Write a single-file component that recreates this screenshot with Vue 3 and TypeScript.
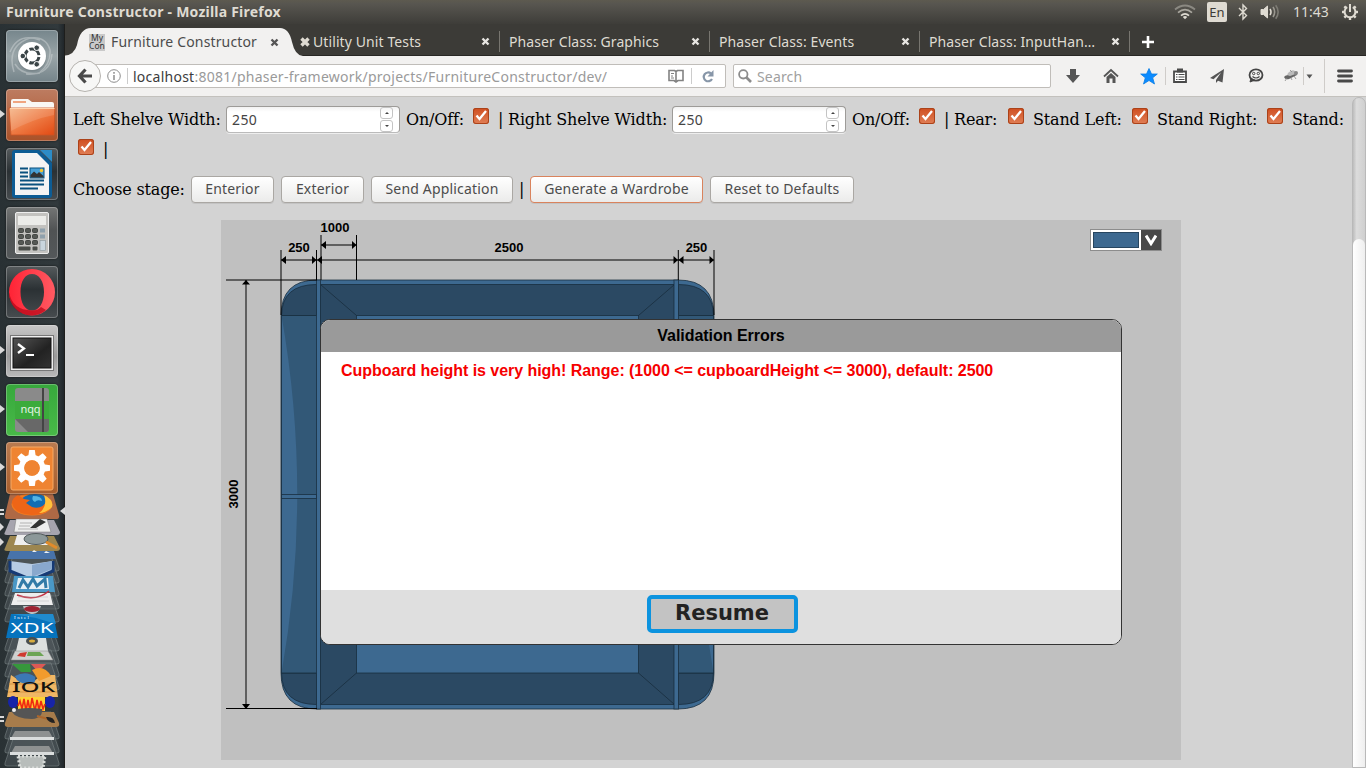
<script setup lang="ts">
interface Tab { title: string; mark?: boolean }
interface Field { label: string; width: number }
interface StageButton { label: string; width: number; active?: boolean; bar?: boolean }

const tabs: Tab[] = [
  { title: 'Utility Unit Tests', mark: true },
  { title: 'Phaser Class: Graphics' },
  { title: 'Phaser Class: Events' },
  { title: 'Phaser Class: InputHan…' },
]

const shelves: Field[] = [
  { label: 'Left Shelve Width:', width: 147 },
  { label: 'Right Shelve Width:', width: 158 },
]
const toggles: Field[] = [
  { label: 'Rear:', width: 44 },
  { label: 'Stand Left:', width: 89 },
  { label: 'Stand Right:', width: 100 },
]

const buttons: StageButton[] = [
  { label: 'Enterior', width: 83 },
  { label: 'Exterior', width: 83 },
  { label: 'Send Application', width: 142, bar: true },
  { label: 'Generate a Wardrobe', width: 173, active: true },
  { label: 'Reset to Defaults', width: 144 },
]

const plates: number[] = [562, 574, 587, 600, 613, 642, 655, 668, 681, 730, 744, 757]
const keys: number[] = [0, 1, 2, 3, 4, 5, 6, 7, 8]
const teeth: number[] = [0, 45, 90, 135, 180, 225, 270, 315]
</script>

<template>
  <div class="desktop">
    <header class="panel">
      <span class="panel-title">Furniture Constructor - Mozilla Firefox</span>
      <div class="indicators">
        <svg width="22" height="16" viewBox="0 0 22 16" fill="none" stroke-width="1.7">
          <path d="M1 5.5Q11 -2.5 21 5.5" stroke="#8b8982" />
          <path d="M4 8.7Q11 2.7 18 8.7" stroke="#aaa79f" />
          <path d="M7 11.6Q11 8 15 11.6" stroke="#dfdbd2" />
          <path d="M8.8 13L11 15.2 13.2 13Q11 11.2 8.8 13Z" fill="#dfdbd2" />
        </svg>
        <span class="lang">En</span>
        <svg class="bt" width="10" height="18" viewBox="0 0 10 18" fill="none" stroke="#dfdbd2" stroke-width="1.4"><path d="M1 5L8.5 12.5 5 16V2L8.5 5.5 1 13" /></svg>
        <svg class="vol" width="20" height="16" viewBox="0 0 20 16" fill="none" stroke-width="1.6">
          <path d="M1 5.5H3.5L7.5 2V14L3.5 10.5H1Z" fill="#dfdbd2" stroke="#dfdbd2" stroke-width="1" />
          <path d="M10 5Q12 8 10 11" stroke="#dfdbd2" /><path d="M13 3Q16.3 8 13 13" stroke="#9a978f" /><path d="M15.7 1.3Q20.6 8 15.7 14.7" stroke="#7d7b74" />
        </svg>
        <span class="clock">11:43</span>
        <svg width="18" height="18" viewBox="-9 -9 18 18" fill="none" stroke="#dfdbd2">
          <path d="M-2.8-4.8A5.4 5.4 0 1 0 2.8-4.8" stroke-width="2" />
          <path d="M0-8V0" stroke-width="2" />
          <path v-for="a in [45, 90, 135, 180, 225, 270, 315]" :key="a" d="M0-5.5V-8" stroke-width="2.4" :transform="`rotate(${a})`" />
        </svg>
      </div>
    </header>

    <div class="below">
      <aside class="launcher">
        <div class="tile dash">
          <svg width="52" height="52" viewBox="0 0 52 52">
            <g fill="none" stroke="#d5dadb" opacity=".45" stroke-width="1.5"><path d="M8 42Q0 16 24 8Q40 6 44 20Q45 34 34 42" /><path d="M4 22Q12 2 34 10M20 44Q44 46 46 24M9 34Q16 46 34 43" /></g>
            <circle cx="26" cy="27" r="14.5" fill="#6f7b80" opacity=".5" /><circle cx="26" cy="26" r="14" fill="#fff" />
            <circle cx="26" cy="26" r="7" fill="none" stroke="#3a4447" stroke-width="3" stroke-dasharray="12.6 2" stroke-dashoffset="-1" />
            <g fill="#3a4447" stroke="#fff" stroke-width="1"><circle cx="16.8" cy="26" r="2.8" /><circle cx="30.7" cy="17.7" r="2.8" /><circle cx="30.7" cy="34.3" r="2.8" /></g>
          </svg>
        </div>
        <div class="tile files">
          <svg width="52" height="52" viewBox="0 0 52 52">
            <defs><linearGradient id="fold" x1="0" y1="0" x2="1" y2="1"><stop offset="0" stop-color="#f5b485" /><stop offset=".5" stop-color="#ee7a43" /><stop offset="1" stop-color="#e24912" /></linearGradient></defs>
            <path d="M5 19V12Q5 10 7 10H22L26 13H46Q48 13 48 15V20H5Z" fill="#f9f7f4" /><rect x="7" y="12" width="13" height="2" fill="#f0a580" />
            <path d="M3 19H49L48 46H5Z" fill="url(#fold)" stroke="#cd5424" stroke-width=".8" /><path d="M4 19.5H48.5" stroke="#ffd2ac" />
            <path d="M4 20H48V26Q27 30 5 42Z" fill="#fff" opacity=".13" />
          </svg><i class="pip"></i>
        </div>
        <div class="tile dark">
          <svg width="52" height="52" viewBox="0 0 52 52">
            <path d="M6 5Q6 2 9 2H33L46 15V47Q46 50 43 50H9Q6 50 6 47Z" fill="#0d5c94" /><path d="M34 2H46V14Z" fill="#2c8cc7" />
            <path d="M9 5H31L43 17V47H9Z" fill="#f4f4f4" />
            <path d="M14 20.5H22M14 24.5H22M14 28.5H22M14 32.5H38M14 36.5H38M14 40.5H32" stroke="#09517f" stroke-width="2" />
            <rect x="24" y="20" width="14" height="10" fill="#49a0d6" stroke="#09517f" /><path d="M24.5 29.5V27L28 23.5 31 26 33 24 37.5 28V29.5Z" fill="#333" /><circle cx="35.5" cy="22.5" r="1.7" fill="#f5c62c" />
          </svg>
        </div>
        <div class="tile calc">
          <svg width="52" height="52" viewBox="0 0 52 52">
            <rect x="9.5" y="5.5" width="33" height="41" rx="1.5" fill="#c3c2bf" stroke="#eee" /><rect x="12" y="9" width="28" height="9" fill="#ecece9" />
            <rect v-for="k in keys" :key="k" :x="12.5 + (k % 3) * 7" :y="21.5 + Math.floor(k / 3) * 6" width="5" height="4" rx="1" fill="#555854" stroke="#343634" stroke-width=".8" />
            <rect x="12.5" y="39.5" width="12" height="4" rx="1" fill="#4a4d49" /><rect x="26.5" y="39.5" width="5" height="4" rx="1" fill="#4a4d49" />
            <rect x="34" y="21.5" width="5" height="4" fill="#8fa0ac" /><rect x="34" y="27.5" width="5" height="4" fill="#8fa0ac" /><rect x="34" y="33.5" width="5.5" height="10" fill="#c9d5dd" stroke="#8a959c" stroke-width=".6" />
          </svg>
        </div>
        <div class="tile dark">
          <svg width="52" height="52" viewBox="0 0 52 52">
            <defs><linearGradient id="op" x1="0" y1="0" x2="1" y2="0"><stop offset="0" stop-color="#ff2335" /><stop offset="1" stop-color="#ff5a62" /></linearGradient></defs>
            <path fill-rule="evenodd" d="M26 3A23 23.2 0 1 0 26 49.4A23 23.2 0 1 0 26 3ZM26 8C33 8 38 15 38 26S33 44.5 26 44.5S14.5 37 14.5 26S19 8 26 8Z" fill="url(#op)" />
            <path d="M26 49.4C12 49.4 3 39 3 26Q6 44 26 44.5Q32 44.5 35 41L40 44Q34 49.4 26 49.4Z" fill="#b30416" opacity=".7" />
          </svg>
        </div>
        <div class="tile term">
          <svg width="52" height="52" viewBox="0 0 52 52">
            <defs><linearGradient id="tm" x1="0" y1="0" x2="1" y2="1"><stop offset="0" stop-color="#555" /><stop offset=".6" stop-color="#222" /><stop offset="1" stop-color="#333" /></linearGradient></defs>
            <rect x="4.5" y="10.5" width="43" height="35" fill="#eee" stroke="#777" /><rect x="7" y="13" width="38" height="30" fill="url(#tm)" stroke="#111" />
            <path d="M12 19L18 23.5 12 28" fill="none" stroke="#fff" stroke-width="2.3" /><path d="M20 30H28" stroke="#fff" stroke-width="2" />
          </svg><i class="pip"></i>
        </div>
        <div class="tile nqq">
          <svg width="52" height="52" viewBox="0 0 52 52">
            <rect x="9" y="4" width="34" height="44" rx="3" fill="#8a8a8a" /><rect x="9" y="17" width="34" height="18" fill="#3cab3c" /><path d="M9 35H43V45Q43 48 40 48H22Z" fill="#686868" /><rect x="36" y="4" width="2" height="44" fill="#444" />
            <text x="14.5" y="29" font-family="Noto Sans, sans-serif" font-size="11" fill="#e8f5e8" textLength="20">nqq</text>
          </svg><i class="pip"></i>
        </div>
        <div class="tile gear">
          <svg width="52" height="52" viewBox="-26 -26 52 52">
            <rect x="-21" y="-21" width="42" height="43" rx="2" fill="#ef8432" stroke="#f6aa65" />
            <g fill="#fff"><path v-for="a in teeth" :key="a" d="M-4-10L-2.8-18H2.8L4-10Z" :transform="`rotate(${a})`" /></g><circle r="10.5" fill="none" stroke="#fff" stroke-width="5.5" /><circle r="7.7" fill="#ef8432" />
          </svg><i class="pip"></i>
        </div>
        <svg class="pile" width="65" height="274" viewBox="0 494 65 274">
          <g fill="#596165" fill-opacity=".45" stroke="#7e8688" stroke-opacity=".55"><path v-for="y in plates" :key="y" :d="`M13 ${y - 18}H51L59 ${y + 6}Q60 ${y + 9} 57 ${y + 9}H7Q4 ${y + 9} 5 ${y + 6}Z`" /></g>
          <path d="M10 494H53L59 515Q60 519 56 519H8Q4 519 5 515Z" fill="#ae6945" />
          <ellipse cx="32" cy="504.500" rx="20.500" ry="11" fill="#f27b20" /><ellipse cx="35" cy="502" rx="14" ry="8" fill="#126db4" /><path d="M33 496Q42 496 42 501Q37 499 35 502Q31 500 33 496Z" fill="#55b5e4" />
          <path d="M12 503Q12 498 18 495L24 499 30 500 26 503 32 507Q42 510 48 500L52 502Q50 515 32 515Q14 514 12 503Z" fill="#ee6517" /><path d="M44 495Q54 500 52 507Q46 513 39 513Q48 507 44 495Z" fill="#ffc23b" />
          <path d="M10 520H54L60 532Q60 535 57 535H7Q3 535 5 532Z" fill="#a6a4ae" /><path d="M16 519H47L51 532H14Z" fill="#eee" stroke="#777" stroke-width=".5" /><path d="M20 523H32M19 526H30M18 529H38" stroke="#999" stroke-width=".7" /><path d="M30 528L40 519 46 522 36 528Z" fill="#333" />
          <path d="M10 536H54L60 548Q60 551 57 551H7Q3 551 5 548Z" fill="#9c8650" /><path d="M17 535H44L48 545H14Z" fill="#eee" /><ellipse cx="36" cy="539" rx="12" ry="5.5" fill="#8c9899" stroke="#555d5e" /><path d="M46 542L57 548" stroke="#e08b2a" stroke-width="3" />
          <path d="M10 551H54L56 559H7Z" fill="#4873aa" /><path d="M32 552L34 550 37 552ZM44 553L46 551 50 553Z" fill="#edf2f7" />
          <path d="M10 561L32 564 53 561V571L32 580 10 571Z" fill="#b7cce4" /><path d="M10 561V571L32 580 53 571V561" fill="none" stroke="#163a75" stroke-width="3" /><path d="M32 565V577L52 569V561Z" fill="#89a8cd" />
          <path d="M14 576H53L55 592H12Z" fill="#4a98c6" /><path d="M18 578H48L49 589H16Z" fill="#e5f0f5" /><path d="M19 588L23 580 28 587 33 579 37 586 45 579 46 588" fill="none" stroke="#317ba7" stroke-width="3" />
          <path d="M15 593H50L53 605H11Z" fill="#eee" /><path d="M17 595Q36 602 49 591" fill="none" stroke="#c23244" stroke-width="1.5" /><path d="M18 597H48M17 601H49" stroke="#bbb" stroke-width=".5" />
          <path d="M23 606H41Q39 613 33 614V619H39V621H26V619H31V614Q24 612 23 606Z" fill="#b9c0c2" /><ellipse cx="32" cy="609" rx="8" ry="3" fill="#9d2332" />
          <path d="M11 614H53L58 638H6Z" fill="#0673bd" /><path d="M12 614H53L56 624 36 618Z" fill="#208bcd" /><text x="10.5" y="633" textLength="43" lengthAdjust="spacingAndGlyphs" font-family="Noto Sans, sans-serif" font-size="14" fill="#fff">XDK</text><text x="14" y="618.5" textLength="15" font-family="Liberation Serif, serif" font-size="5" fill="#fff">Intel</text>
          <path d="M19 638H46L48 651H16Z" fill="#dce0df" /><ellipse cx="32" cy="641" rx="6" ry="4" fill="#494f50" /><ellipse cx="32" cy="641" rx="3" ry="1.5" fill="#d8ad3f" />
          <path d="M15 651H48L53 660H11Z" fill="#cfd1d0" stroke="#888" stroke-width=".5" /><path d="M20 653L27 652 25 657 17 656Z" fill="#cf392f" /><path d="M28 652H40L44 656H27Z" fill="#6ca454" />
          <path d="M11 675L20 681H34L42 675H55L58 697H7Z" fill="#f0b765" /><path d="M8 692H57M9 684H56" stroke="#d79443" stroke-width="1" />
          <path d="M12 664H30L31 672H21Z" fill="#36973c" /><path d="M31 664H46L38 672Z" fill="#dd5955" /><path d="M15 676Q26 670 35 677Q37 684 29 684Q17 684 15 676Z" fill="#3c78b5" /><path d="M32 670Q44 664 51 676L39 681Z" fill="#f29b2d" />
          <text x="12" y="692" textLength="43" lengthAdjust="spacingAndGlyphs" font-family="Noto Sans, sans-serif" font-weight="500" font-size="15" fill="#15120d">IOK</text>
          <ellipse cx="13" cy="702" rx="5" ry="6" fill="#1724a8" /><ellipse cx="50" cy="702" rx="5" ry="6" fill="#1724a8" /><rect x="18" y="697" width="27" height="14" fill="#ffd234" /><path d="M18 706L20 701 22 709 24 699 26 711 28 700 30 711 32 698 35 711 37 700 39 710 41 701 43 709 45 704" fill="none" stroke="#f02912" stroke-width="1.6" />
          <path d="M9 712H54L59 723Q60 727 56 727H8Q4 727 5 723Z" fill="#a77c4b" /><path d="M11 711Q23 706 42 709Q43 718 32 719Q16 719 11 711Z" fill="#555" /><circle cx="14" cy="710" r="2" fill="#eee" /><path d="M37 716L48 719" stroke="#ad662b" stroke-width="2" /><path d="M46 717Q54 716 55 723Q48 723 46 717Z" fill="#222" />
          <path d="M15 731H49L54 740H10Z" fill="#8e9191" /><path d="M10 737H54V740H10Z" fill="#dadddd" /><path d="M15 746H49L54 755H10Z" fill="#8e9191" /><path d="M10 752H54V755H10Z" fill="#dadddd" /><path d="M18 756L45 756 43 768H20Z" fill="#b8bdbb" stroke="#d9dcda" stroke-dasharray="2 2" stroke-width="3" />
          <g fill="#d9d9d9"><path d="M0 509H4V511H0ZM0 513H4V515H0ZM65 507V515L60 511Z" /><path d="M0 523L4 527 0 531ZM0 538L4 542 0 546Z" /><path d="M0 716H4V718H0ZM0 720H4V722H0Z" /></g>
        </svg>
      </aside>

      <main class="browser">
        <div class="tabbar">
          <div class="tab-active">
            <svg class="tab-shape" width="240" height="33" viewBox="65 24 240 33"><path d="M65 57V55.5Q74 55 77 45Q80 28 91 28H280Q289 28 292 42Q295 55.5 303 56H305V57Z" fill="#f2f1f0" /></svg>
            <span class="favicon">My<br>Con</span>
            <span class="tab-title">Furniture Constructor</span>
            <svg class="x" width="9" height="9" viewBox="0 0 9 9"><path d="M1.5 1.5L7.5 7.5M7.5 1.5L1.5 7.5" stroke="#555" stroke-width="2.4" /></svg>
          </div>
          <div v-for="t in tabs" :key="t.title" class="tab" :class="{ marked: t.mark }">
            <svg v-if="t.mark" class="heavy" width="10" height="10" viewBox="0 0 10 10"><path d="M1.5 1.5L8.5 8.5M8.5 1.5L1.5 8.5" stroke="#dfdbd2" stroke-width="3.4" /></svg>
            <span class="tab-title">{{ t.title }}</span>
            <svg class="x" width="9" height="9" viewBox="0 0 9 9"><path d="M1.5 1.5L7.5 7.5M7.5 1.5L1.5 7.5" stroke="#e8e6e2" stroke-width="2.4" /></svg>
          </div>
          <svg class="plus" width="14" height="14" viewBox="0 0 14 14"><path d="M7 1V13M1 7H13" stroke="#fff" stroke-width="2.6" /></svg>
        </div>

        <nav class="nav">
          <span class="back"><svg width="16" height="16" viewBox="0 0 16 16" fill="none" stroke="#4a4a4a" stroke-width="3.2"><path d="M8.5 1.5L2.5 8 8.5 14.5M3 8H15" /></svg></span>
          <div class="url">
            <svg width="14" height="14" viewBox="0 0 14 14"><circle cx="7" cy="7" r="6.3" fill="none" stroke="#8d8d8d" /><path d="M7 6V11M7 3V4.7" stroke="#8d8d8d" stroke-width="1.5" /></svg>
            <i class="bar"></i>
            <span class="address">localhost<em>:8081/phaser-framework/projects/FurnitureConstructor/dev/</em></span>
            <svg class="reader" width="16" height="14" viewBox="0 0 16 14" fill="none" stroke="#828282" stroke-width="1.6"><path d="M8 2.5L6.5 1.5H1V11.5H6L8 13 10 11.5H15V1.5H9.5L8 2.5V12.5" /><path d="M3 4.5H6M3 7H5M3 9H6" stroke-width="1" /></svg>
            <i class="bar"></i>
            <svg class="reload" width="12" height="13" viewBox="0 0 12 13"><path d="M9 3.5A4.4 4.4 0 1 0 10 9" fill="none" stroke="#8796a8" stroke-width="2.2" /><path d="M11.5 0V6.5H5.5Z" fill="#8796a8" /></svg>
          </div>
          <div class="search">
            <svg width="14" height="14" viewBox="0 0 14 14" fill="none" stroke="#8c8c8c"><circle cx="5.3" cy="5.3" r="4.2" stroke-width="1.8" /><path d="M8.5 8.5L13 13" stroke-width="2.6" /></svg>
            <span>Search</span>
          </div>
          <div class="tools">
            <svg width="16" height="16" viewBox="0 0 16 16"><path d="M5 1H11V7H15L8 15 1 7H5Z" fill="#555" /></svg>
            <svg width="16" height="16" viewBox="0 0 16 16"><path d="M1 8.5L8 2 15 8.5" fill="none" stroke="#555" stroke-width="1.800" /><path d="M3.500 9L8 5 12.500 9V15H9.500V10.500H6.500V15H3.500Z" fill="#555" /></svg>
            <svg width="18" height="17" viewBox="0 0 18 17"><path d="M9 .5L11.5 6H17.3L12.7 9.8 14.5 16 9 12.5 3.5 16 5.3 9.8 .7 6H6.5Z" fill="#0b8bff" stroke="#0b7ee4" stroke-width=".8" /></svg>
            <svg width="16" height="16" viewBox="0 0 16 16" fill="none" stroke="#4a4a4a"><path d="M2 3.5H14V14H2Z" fill="#fff" stroke-width="1.8" /><rect x="5.5" y="1" width="5" height="3" fill="#4a4a4a" /><path d="M4 6.5H5.5M6.5 6.5H12.5M4 9H5.5M6.5 9H12.5M4 11.5H5.5M6.5 11.5H12.5" stroke-width="1" /></svg>
            <svg width="16" height="16" viewBox="0 0 16 16"><path d="M15 1L1 10 4.5 11.3 12 4.5 7 12V15L9 12.8 13.5 14.5Z" fill="#555" /></svg>
            <svg width="16" height="16" viewBox="0 0 16 16" fill="none" stroke="#444"><ellipse cx="8" cy="7" rx="6.5" ry="5.6" stroke-width="1.8" /><path d="M3 10L2 14 7 12" fill="#444" /><circle cx="5.7" cy="5.5" r="1.2" /><circle cx="10.3" cy="5.5" r="1.2" /><path d="M4.5 8.5Q8 11.5 11.5 8.5" stroke-width="1.2" /></svg>
            <svg width="16" height="16" viewBox="0 0 16 16"><path d="M5 5Q9 1 12 3L14 5Q11 7 8 8L3 10Z" fill="#bbb" /><path d="M1 9Q3 6 7 8L11 6.500 14 5V7L10 9 6 11Q2 12 1 9Z" fill="#666" /><path d="M4 10L2 13M8 10L9 12M11 8L13 11M9 4L7 2" stroke="#888" stroke-width=".8" /><circle cx="13" cy="5" r="2" fill="#888" /></svg>
            <svg width="7" height="5" viewBox="0 0 7 5"><path d="M.5 .5H6.500L3.500 4.500Z" fill="#555" /></svg>
            <svg width="16" height="14" viewBox="0 0 16 14"><path d="M1.5 2H14.5M1.5 7H14.5M1.5 12H14.5" stroke="#484848" stroke-width="2.8" stroke-linecap="round" /></svg>
            <i class="sep s1"></i><i class="sep s2"></i><i class="sep s3"></i>
          </div>
        </nav>

        <div class="viewport">
          <section class="page">
            <div class="fields">
              <template v-for="s in shelves" :key="s.label">
                <label :style="{ width: s.width + 'px' }">{{ s.label }}</label>
                <span class="number">250<span class="spin"><i class="up"></i><i class="down"></i></span></span>
                <label class="onoff">On/Off:</label>
                <span class="check"><svg width="16" height="16" viewBox="0 0 16 16"><path d="M3.5 7.5L6.5 11 13 3" /></svg></span>
                <b class="pipe">|</b>
              </template>
              <template v-for="t in toggles" :key="t.label">
                <label :style="{ width: t.width + 'px' }">{{ t.label }}</label>
                <span class="check"><svg width="16" height="16" viewBox="0 0 16 16"><path d="M3.5 7.5L6.5 11 13 3" /></svg></span>
              </template>
              <label>Stand:</label>
            </div>
            <div class="fields second">
              <span class="check"><svg width="16" height="16" viewBox="0 0 16 16"><path d="M3.5 7.5L6.5 11 13 3" /></svg></span>
              <b class="pipe">|</b>
            </div>
            <div class="stages">
              <label>Choose stage:</label>
              <template v-for="b in buttons" :key="b.label">
                <button type="button" :class="{ active: b.active }" :style="{ width: b.width + 'px' }">{{ b.label }}</button>
                <b v-if="b.bar" class="pipe">|</b>
              </template>
            </div>

            <div class="canvas">
              <svg class="drawing" width="960" height="540" viewBox="221 220 960 540">
                <g stroke="#172b3b" stroke-opacity=".75" stroke-width="1">
                  <path d="M317 280H678Q714 280 714 316V673Q714 709 678 709H317Q281 709 281 673V316Q281 280 317 280Z" fill="#3d6990" />
                  <path d="M281.5 315.5Q282 284.5 316.5 284.5V315.5ZM678.5 315.5V284.5Q713 284.5 713.5 315.5ZM281.5 673Q282 704.5 316.5 704.5V673ZM678.5 673H713.5Q713 704.5 678.5 704.5Z" fill="#2b4963" />
                  <path d="M281.5 315.5H316.5V673H281.5Q313 494.5 281.5 315.5ZM713.5 315.5H678.5V673H713.5Q682 494.5 713.5 315.5Z" fill="#325877" stroke="none" />
                  <path d="M281.5 315.5H316.5M678.5 315.5H713.5M281.5 315.5V673H316.5M678.5 673H713.5V315.5" fill="none" />
                  <rect x="281.5" y="494.5" width="35" height="4" fill="#3d6990" />
                  <rect x="320.5" y="284.5" width="354" height="420" fill="#2b4963" />
                  <rect x="356.5" y="315.5" width="282" height="357.5" fill="#3d6990" />
                  <path d="M320.5 284.5L356.5 315.5M674.5 284.5L638.5 315.5M320.5 704.5L356.5 673M674.5 704.5L638.5 673" fill="none" />
                  <rect x="316.5" y="280" width="4" height="429" fill="#3d6990" /><rect x="674" y="280" width="4.5" height="429" fill="#3d6990" />
                </g>
                <path d="M281 250V315M316.5 250V280M321 235V280M356.5 235V280M678.3 250V280M714 250V315M281 260H714M321 245H356M226 280H317M226 708.5H317M246 280V709" fill="none" stroke="#000" stroke-width="1" />
                <path d="M281 260l5-4v8ZM316.5 260l-4.5-4v8ZM317 260l5-4v8ZM678 260l-4.5-4v8ZM678.5 260l5-4v8ZM714 260l-4.5-4v8ZM321 245l5-4v8ZM356.5 245l-4.5-4v8ZM246 280l-4 4.5h8ZM246 709l-4-5h8Z" fill="#000" />
                <g class="dim" text-anchor="middle">
                  <text x="299" y="252">250</text><text x="335" y="232">1000</text><text x="509" y="252">2500</text><text x="696.5" y="252">250</text><text transform="translate(238 494) rotate(-90)">3000</text>
                </g>
              </svg>
              <div class="picker"><span class="swatch"></span><span class="drop"><svg width="12" height="12" viewBox="0 0 12 12"><path d="M1 1.5L6 9.500 11 1.500" fill="none" stroke="#fff" stroke-width="3" /></svg></span></div>
              <div class="dialog">
                <h2>Validation Errors</h2>
                <p>Cupboard height is very high! Range: (1000 &lt;= cupboardHeight &lt;= 3000), default: 2500</p>
                <footer><button type="button" class="resume">Resume</button></footer>
              </div>
            </div>
          </section>
          <div class="scroll"><i class="thumb"></i></div>
        </div>
      </main>
    </div>
  </div>
</template>

<style>
html, body { margin: 0; overflow: hidden; }
</style>

<style scoped>
* { box-sizing: border-box; }
svg { display: block; flex: none; }
.desktop { width: 1366px; height: 768px; display: flex; flex-direction: column; overflow: hidden; font-family: "Noto Sans", "Open Sans", sans-serif; font-size: 14px; }
.panel { height: 24px; flex: none; display: flex; align-items: center; padding: 0 7px 0 6px; background: linear-gradient(#5d5a4f, #585650 15%, #3e3d39); color: #dfdbd2; justify-content: space-between; }
.panel-title { font-weight: 700; font-size: 14px; letter-spacing: .22px; margin-top: -2px; }
.indicators { display: flex; align-items: center; }
.lang { width: 20px; height: 20px; background: #dfdbd2; color: #3d3b37; border-radius: 2px; margin: 0 11px 0 11px; text-align: center; line-height: 20px; font-size: 13px; }
.bt { margin-right: 12px; }
.vol { margin-right: 13px; }
.clock { width: 36px; margin: -1px 12px 0 0; white-space: nowrap; }
.below { flex: 1; display: flex; min-height: 0; }
.launcher { width: 65px; flex: none; background: linear-gradient(90deg, #293134, #31393c 90%, #20262a); display: flex; flex-direction: column; align-items: flex-start; border-right: 1px solid #1e1e1c; padding-top: 6px; gap: 7px; }
.tile { position: relative; width: 52px; height: 52px; margin-left: 6px; flex: none; border-radius: 4px; box-shadow: inset 0 0 0 1px rgba(255, 255, 255, .25), 0 0 2px #111; }
.dash { background: linear-gradient(#76868c, #9aa5a8 50%, #75848a); }
.files { background: linear-gradient(#bd7c61, #a95128); }
.dark { background: linear-gradient(#565b5d, #2b3134 45%, #474c4f); }
.calc { background: linear-gradient(#747675, #505354 45%, #54585a); }
.term { background: linear-gradient(#c7c7c7, #9b9b9b 60%, #b9b9b9); }
.nqq { background: linear-gradient(#37a83c, #48ba48); }
.gear { background: linear-gradient(#b97b50, #a85e2c); margin-top: -1px; }
.pip { position: absolute; left: -6px; top: 21px; border: 4px solid transparent; border-left: 5px solid #d9d9d9; border-right: 0; }
.pile { margin-top: -7px; }
.browser { flex: 1; min-width: 0; display: flex; flex-direction: column; }
.tabbar { height: 32px; flex: none; display: flex; background: #3c3b37; color: #dfdbd2; border-bottom: 1px solid #282724; }
.tab-active { position: relative; flex: none; width: 224px; height: 32px; display: flex; align-items: center; color: #4c4c4c; padding: 4px 10px 0 24px; }
.tab-shape { position: absolute; left: 0; top: 0; }
.favicon { position: relative; width: 16px; height: 17px; background: #c9c9c9; font-size: 8.5px; line-height: 8.5px; text-align: center; color: #333; margin-right: 6px; }
.tab-title { position: relative; flex: 1; white-space: nowrap; letter-spacing: .1px; }
.tab-active .tab-title { margin-top: -2px; letter-spacing: .15px; }
.tab-active .x { position: relative; }
.tab { width: 210px; flex: none; display: flex; align-items: center; padding: 4px 10px 0 9px; background: linear-gradient(#77756f, #77756f) 100% 7px / 1px 21px no-repeat; }
.tab.marked { width: 211px; padding-left: 11px; }
.tab:last-of-type { letter-spacing: 0; }
.heavy { margin-right: 3px; }
.plus { margin: 11px 0 0 11px; }
.nav { position: relative; height: 41px; flex: none; background: #f2f1f0; display: flex; align-items: center; border-bottom: 1px solid #c3c1bd; color: #a0a0a0; }
.back { position: relative; z-index: 1; width: 32px; height: 32px; margin-left: 4px; border: 1px solid #b5b2ae; border-radius: 50%; background: #f7f7f6; display: flex; align-items: center; justify-content: center; }
.url { flex: none; height: 24px; width: 640px; margin-left: -15px; padding: 0 11px 0 20px; border: 1px solid #c0bdb9; border-radius: 0 2px 2px 0; background: #fff; display: flex; align-items: center; }
.bar { width: 1px; height: 16px; background: #ccc; margin-left: 6px; }
.address { color: #3c3c3c; margin-left: 5px; flex: 1; white-space: nowrap; letter-spacing: .25px; }
.address em { font-style: normal; color: #9a9a9a; }
.reader { margin-right: 1px; }
.reload { margin-left: 10px; }
.search { flex: none; width: 318px; height: 24px; margin-left: 7px; border: 1px solid #c0bdb9; border-radius: 2px; background: #fff; display: flex; align-items: center; padding-left: 4px; gap: 5px; letter-spacing: .15px; }
.tools { position: relative; flex: 1; height: 40px; display: grid; grid-template-columns: 38px 37px 32px 37px 39px 35px 23px 16px 1fr; align-items: center; padding-left: 14px; }
.tools svg:nth-child(9) { margin-left: 15px; }
.sep { position: absolute; width: 1px; background: #cfccc9; }
.s1 { left: 114px; top: 11px; height: 18px; }
.s2 { left: 252px; top: 11px; height: 18px; }
.s3 { left: 273px; top: 3px; height: 34px; }
.viewport { flex: 1; min-height: 0; display: flex; background: #d3d3d3; }
.page { flex: 1; min-width: 0; padding: 7px 0 0 8px; font-family: "DejaVu Serif", serif; font-size: 16px; color: #000; letter-spacing: -.16px; }
.fields { display: flex; align-items: center; white-space: nowrap; height: 28px; }
.fields label { flex: none; padding-top: 2px; }
.fields .onoff { width: 57px; }
.number { flex: none; width: 174px; height: 27px; margin: 3px 6px 0; border: 1px solid #9d9b98; border-bottom-color: #bbb; border-radius: 4px; background: linear-gradient(#f2f2f2, #fff 20%); display: flex; align-items: center; justify-content: space-between; padding: 0 6px 0 5px; font: 14px "Noto Sans", sans-serif; letter-spacing: .4px; color: #444; box-shadow: 0 1px #eee; }
.spin { display: flex; flex-direction: column; gap: 1px; }
.spin i { width: 13px; height: 12px; border: 1px solid #c4c4c4; border-radius: 3px; display: flex; align-items: center; justify-content: center; }
.spin i::before { content: ""; border: 2px solid transparent; border-bottom-color: #444; border-top: 0; }
.spin .down::before { border-bottom: 0; border-top: 2px solid #444; }
.check { width: 16px; height: 16px; margin: -4px 9px 0 10px; flex: none; border-radius: 3px; background: linear-gradient(#cf4e20, #e07f56); box-shadow: inset 0 0 0 1px #ab4219; }
.check path { fill: none; stroke: #fff; stroke-width: 2.3; }
.pipe { flex: none; font-weight: 400; margin-right: 5px; padding-top: 2px; width: 5px; }
.second { height: 30px; margin-top: 1px; }
.second .check { margin: -2px 9px 0 5px; }
.second .pipe { padding-top: 2px; }
.stages { display: flex; align-items: center; height: 28px; margin-top: 12px; white-space: nowrap; }
.stages label { width: 112px; }
.stages button { flex: none; height: 27px; margin-left: 7px; padding: 0 0 1px; border: 1px solid #aaa7a3; border-radius: 4px; background: linear-gradient(#fff, #ebebea); font: 14px "Noto Sans", sans-serif; letter-spacing: .18px; color: #4c4c4c; text-align: center; box-shadow: 0 1px #c3c3c3; }
.stages button:first-of-type { margin-left: 6px; }
.stages button.active { border-color: #d9835d; }
.stages .pipe { margin: 0 -2px 0 6px; padding: 0; width: 6px; }
.canvas { position: relative; width: 960px; height: 540px; margin: 17px 0 0 148px; background: #c0c0c0; font-family: "Liberation Sans", Arial, sans-serif; letter-spacing: 0; }
.dim { font: bold 13px "Liberation Sans", sans-serif; fill: #000; }
.picker { position: absolute; left: 869px; top: 9px; width: 72px; height: 22px; border: 1px solid #8c8c8c; background: #fff; display: flex; }
.swatch { flex: 1; margin: 2px; border: 1px solid #26455f; background: #3d6990; }
.drop { width: 20px; background: #484848; display: flex; align-items: center; justify-content: center; }
.dialog { position: absolute; left: 99px; top: 99px; width: 802px; height: 326px; border: 1px solid #333; border-radius: 10px; overflow: hidden; background: #fff; display: flex; flex-direction: column; }
.dialog h2 { margin: 0; height: 32px; background: #9a9a9a; font-size: 16px; line-height: 32px; text-align: center; letter-spacing: -.04px; }
.dialog p { flex: 1; margin: 0; padding: 10px 20px; font-size: 16px; line-height: 18px; font-weight: 700; color: #f60000; letter-spacing: -.047px; white-space: nowrap; }
.dialog footer { height: 54px; background: #dfdfdf; display: flex; justify-content: center; padding: 5px 0 0 2px; }
.resume { width: 151px; height: 38px; border: 4px solid #0c93df; border-radius: 5px; background: #c3c3c3; padding: 0 0 2px; font: bold 21px "DejaVu Sans", sans-serif; color: #222; }
.scroll { width: 14px; flex: none; background: linear-gradient(90deg, #bdbdbd, #dcdcdc 30%, #cfcfcf); border: 1px solid #b9b9b9; border-radius: 7px 7px 0 0; padding-top: 141px; display: flex; }
.thumb { flex: 1; background: linear-gradient(90deg, #fff, #eee); border-radius: 6px 6px 0 0; }
</style>
